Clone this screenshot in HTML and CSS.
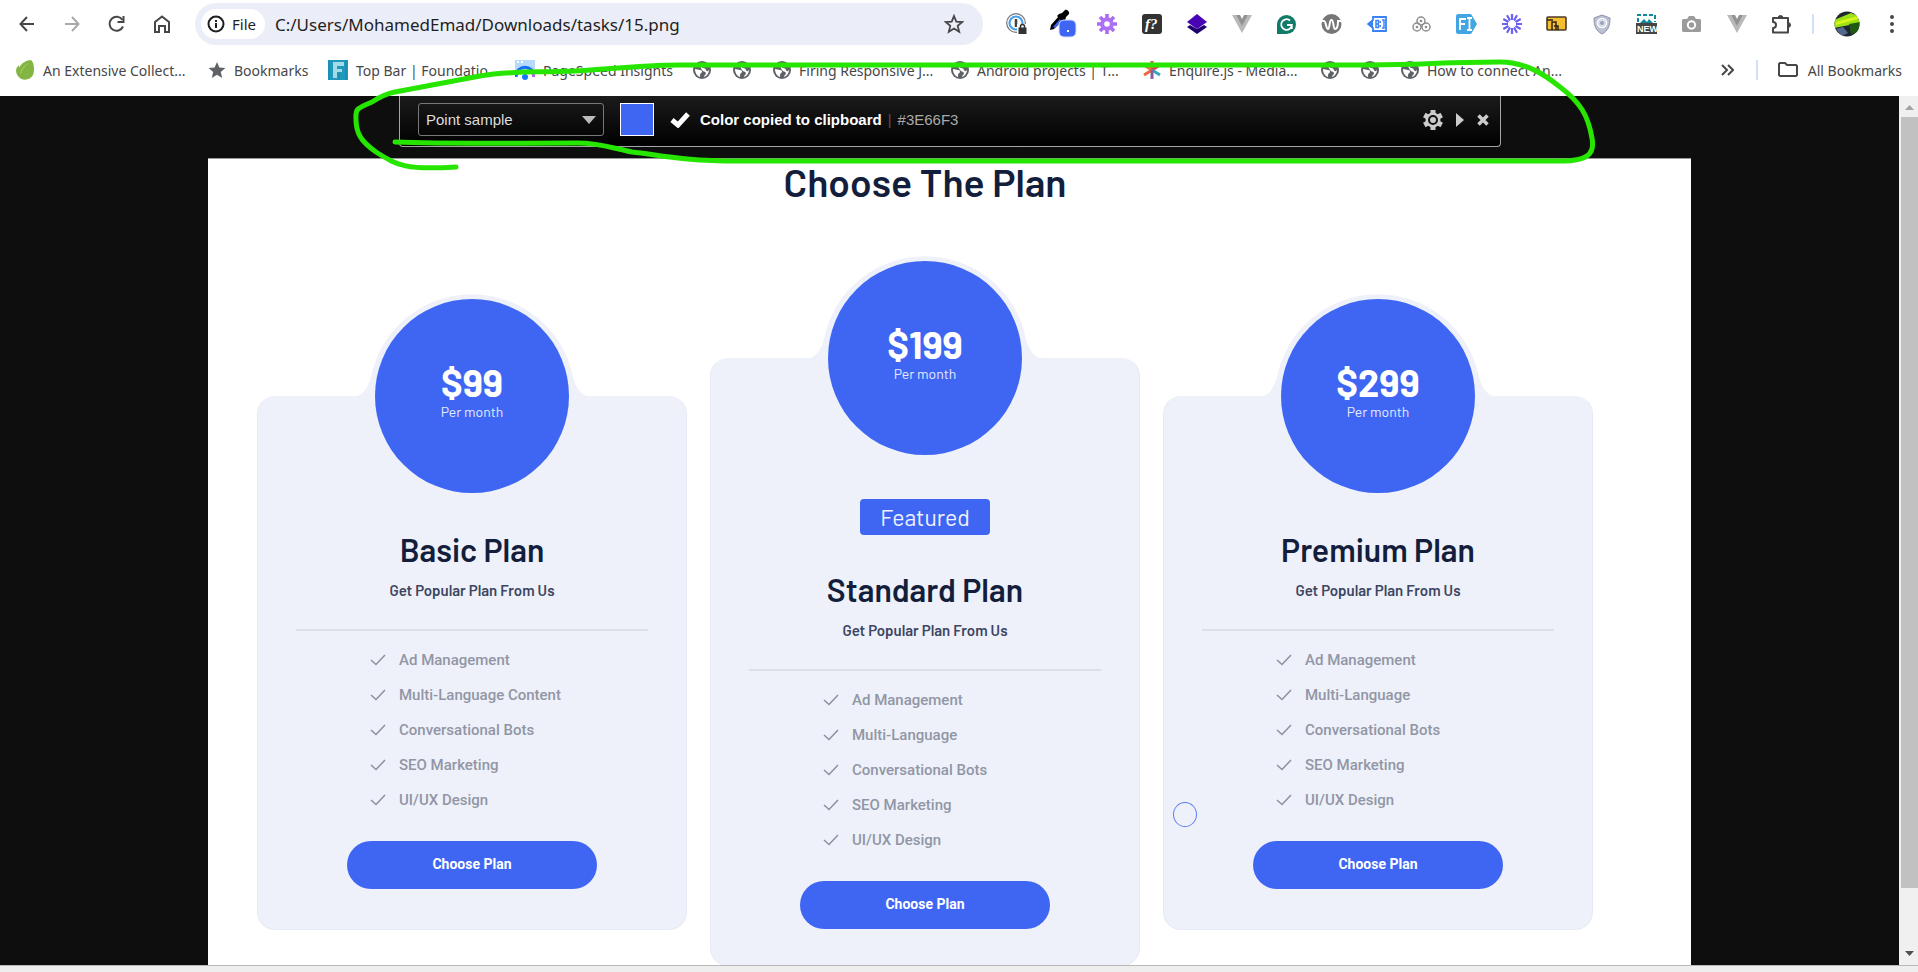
FILE: index.html
```html
<!DOCTYPE html>
<html lang="en">
<head>
<meta charset="utf-8">
<title>15.png</title>
<link rel="stylesheet" href="styles.css">
</head>
<body>
<svg class="defs" aria-hidden="true">
  <symbol id="globe" viewBox="0 0 18 18"><circle cx="9" cy="9" r="9" fill="#5f6368"/><path d="M2 8c2 0 3 1 5 1s2 1 2 2-2 1-2 3v2C4 15 2 12 2 8zM9 2c2 0 3 0 4 1l-1 2h-2L9 7c2 0 3 0 4 2s2 1 3 0c0 3-2 6-5 7 0-2 2-2 2-4-1-2-3-1-4-3S7 6 7 4z" fill="#fff"/></symbol>
  <symbol id="tick" viewBox="0 0 16 12"><path d="M1 6l5 4.500L15 1" fill="none" stroke="#8b90a0" stroke-width="1.500"/></symbol>
  <symbol id="hump" viewBox="0 0 244 104"><path d="M0 104C14 104 18 94 21 84A103 103 0 0 1 223 84C226 94 230 104 244 104Z" fill="#eef1f9"/></symbol>
  <symbol id="vue" viewBox="0 0 20 18"><path d="M0 0h4l6 10L16 0h4L10 18z" fill="#b9b9b9"/><path d="M4 0h4l2 4 2-4h4l-6 11z" fill="#929292"/></symbol>
</svg>

<header class="chrome">
  <div class="toolbar">
    <nav class="nav">
      <button class="tool" aria-label="Back"><svg width="16" height="16" viewBox="0 0 16 16"><path d="M15 8H2M8 1L1.500 8 8 15" fill="none" stroke="#474747" stroke-width="2"/></svg></button>
      <button class="tool" aria-label="Forward"><svg width="16" height="16" viewBox="0 0 16 16"><path d="M1 8h13M8 1l6.500 7L8 15" fill="none" stroke="#a9a9a9" stroke-width="2"/></svg></button>
      <button class="tool" aria-label="Reload"><svg width="18" height="18" viewBox="0 0 18 18"><path d="M15 11.500A7 7 0 1 1 14.500 5" fill="none" stroke="#474747" stroke-width="2"/><path d="M15.500 1v6h-6" fill="none" stroke="#474747" stroke-width="2"/></svg></button>
      <button class="tool" aria-label="Home"><svg width="16" height="18" viewBox="0 0 16 18"><path d="M1 7l7-5.500L15 7v10h-4v-6H5v6H1z" fill="none" stroke="#474747" stroke-width="2"/></svg></button>
    </nav>
    <div class="omnibox">
      <button class="site"><svg width="18" height="18" viewBox="0 0 18 18"><circle cx="9" cy="9" r="7.500" fill="none" stroke="#1f1f1f" stroke-width="2"/><path d="M9 8v5M9 5v2" stroke="#1f1f1f" stroke-width="2"/></svg>File</button>
      <input class="url" aria-label="Address" value="C:/Users/MohamedEmad/Downloads/tasks/15.png">
      <button class="star" aria-label="Bookmark this page"><svg width="20" height="20" viewBox="0 0 20 20"><path d="M10 2l2.300 5.600 6 .4-4.600 3.900 1.500 5.900L10 14.600l-5.200 3.200 1.500-5.900L1.700 8l6-.4z" fill="none" stroke="#474747" stroke-width="1.800"/></svg></button>
    </div>
    <div class="extensions">
      <button class="tool" aria-label="Password manager"><svg width="22" height="22" viewBox="0 0 22 22"><circle cx="10" cy="10" r="9.300" fill="none" stroke="#777" stroke-width="1.200"/><circle cx="10" cy="10" r="6.500" fill="none" stroke="#4a9fe8" stroke-width="2.200"/><path d="M10 6v8" stroke="#444" stroke-width="2.600"/><path d="M11 11h11v11H11z" fill="#fff"/><path d="M12.500 14.500h8V21h-8z" fill="#333"/><path d="M14.500 15v-1.500a2 2 0 0 1 4 0V15" fill="none" stroke="#333" stroke-width="1.500"/></svg></button>
      <button class="tool" aria-label="Color picker"><svg width="30" height="30" viewBox="0 0 30 30"><path d="M3 21l1-5 8-9 4 4-9 9z" fill="#000"/><path d="M6 18l7-8 2 2-7 7z" fill="#3e66f3"/><path d="M12 5l3-1 3-3c2-1 5 2 4 4l-3 3-1 4-2 1-6-6z" fill="#000"/><rect x="12" y="11" width="17" height="17" rx="5" fill="#3e66f3" stroke="#d7e0ff"/><path d="M20 21h2v2h-2z" fill="#fff"/></svg></button>
      <button class="tool" aria-label="Settings extension"><svg width="20" height="20" viewBox="0 0 20 20"><g stroke="#a66cf3" stroke-width="3.500"><path d="M10 0v20M0 10h20M3 3l14 14M17 3L3 17"/></g><circle cx="10" cy="10" r="6.800" fill="#ae70f4"/><circle cx="10" cy="10" r="2.800" fill="#fff"/></svg></button>
      <button class="tool" aria-label="Font finder"><svg width="20" height="20" viewBox="0 0 20 20"><rect width="20" height="20" rx="3" fill="#333"/><text x="3" y="15" class="glyph-f">f?</text></svg></button>
      <button class="tool" aria-label="Layers"><svg width="20" height="20" viewBox="0 0 20 20"><path d="M0 13l3-2 7 4 7-4 3 2-10 7z" fill="#210070"/><path d="M10 0l10 8-10 7L0 8z" fill="#4704b5"/></svg></button>
      <button class="tool" aria-label="Vue devtools"><svg width="20" height="18"><use href="#vue"/></svg></button>
      <button class="tool" aria-label="Grammar"><svg width="19" height="19" viewBox="0 0 19 19"><path d="M0 19V9.500A9.500 9.500 0 1 1 9.500 19z" fill="#117a68"/><path d="M13 5.500A5.300 5.300 0 1 0 14.800 10H10M14.800 9.500V14" fill="none" stroke="#fff" stroke-width="1.800"/></svg></button>
      <button class="tool" aria-label="WhatRuns"><svg width="21" height="20" viewBox="0 0 21 20"><circle cx="10.500" cy="10" r="10" fill="#777"/><path d="M0 7h3c2 0 2 8 4 8s1-9 3.500-9S12 15 14 15s3-4 3-8h4" fill="none" stroke="#fff" stroke-width="2"/></svg></button>
      <button class="tool" aria-label="Tag extension"><svg width="20" height="16" viewBox="0 0 20 16"><path d="M19 1H6v3L1 8l5 4v3h13z" fill="#fff" stroke="#3b82f6" stroke-width="1.800"/><path d="M1 8l5-4v8z" fill="#3b82f6"/><path d="M9 4.500h2.500v7H9zM9 8h2.500M15 4h2v8h-2" fill="none" stroke="#3b82f6" stroke-width="1.500"/><path d="M13.300 5v2M13.300 9v2" stroke="#3b82f6" stroke-width="1.500"/></svg></button>
      <button class="tool" aria-label="Circles extension"><svg width="19" height="16" viewBox="0 0 19 16"><g fill="none" stroke="#8f8f8f" stroke-width="1.500"><circle cx="9" cy="5" r="4"/><circle cx="5" cy="11" r="4"/><circle cx="14" cy="11" r="4"/></g><g fill="#8f8f8f"><circle cx="9" cy="5" r="1.300"/><circle cx="5" cy="11" r="1.300"/><circle cx="14" cy="11" r="1.300"/></g></svg></button>
      <button class="tool" aria-label="Form filler"><svg width="21" height="20" viewBox="0 0 21 20"><path d="M2 0h13l6 10-6 10H2a2 2 0 0 1-2-2V2a2 2 0 0 1 2-2z" fill="#43a5e2"/><path d="M4 16V5h6M4 10h5M11 4h5M11 16h5M13.500 4v12" fill="none" stroke="#fff" stroke-width="1.800"/></svg></button>
      <button class="tool" aria-label="Burst extension"><svg width="20" height="20" viewBox="0 0 20 20"><path d="M10 0v6M10 14v6M0 10h6M14 10h6M5 1.300l3 5.200M12 13.500l3 5.200M15 1.300l-3 5.200M8 13.500l-3 5.200M1.300 5l5.200 3M13.500 12l5.200 3M1.300 15l5.200-3M13.500 8l5.200-3" stroke="#6a62f5" stroke-width="2.200"/></svg></button>
      <button class="tool" aria-label="Folder extension"><svg width="21" height="16" viewBox="0 0 21 16"><rect x="1" y="1" width="19" height="13" rx="1" fill="#f5bd32" stroke="#4b3b28" stroke-width="1.600"/><path d="M1 4h6M6 14V6h4v8M8 10h4v4" fill="none" stroke="#302415" stroke-width="1.500"/></svg></button>
      <button class="tool" aria-label="Shield"><svg width="18" height="21" viewBox="0 0 18 21"><path d="M9 1l8 3c0 8-2 13-8 16C3 17 1 12 1 4z" fill="#b9c1d3" stroke="#8c94aa"/><circle cx="9" cy="9" r="4.700" fill="#d7dce8" stroke="#fff" stroke-width="1.300"/><circle cx="9" cy="9" r="2" fill="#9aa3b8"/></svg></button>
      <button class="tool" aria-label="Image capture"><svg width="21" height="20" viewBox="0 0 21 20"><path d="M2 8V1h17v7" fill="none" stroke="#12899a" stroke-width="2" stroke-dasharray="4 2"/><path d="M4 9l4-4 3 3 2-3 4 4z" fill="#12899a"/><path d="M0 9h21v11H0z" fill="#454545"/><text x="1" y="18" class="glyph-new">NEW</text></svg></button>
      <button class="tool" aria-label="Screenshot"><svg width="19" height="16" viewBox="0 0 19 16"><path d="M1 3h4l2-3h5l2 3h4l1 1v11l-1 1H1l-1-1V4z" fill="#9b9b9b"/><circle cx="9.500" cy="9" r="3.700" fill="none" stroke="#fff" stroke-width="2"/></svg></button>
      <button class="tool" aria-label="Vue devtools legacy"><svg width="20" height="18"><use href="#vue"/></svg></button>
      <button class="tool" aria-label="Extensions"><svg width="22" height="21" viewBox="0 0 22 21"><path d="M2 4h15v14.500H2v-4.500c4 0 4-6 0-6z" fill="none" stroke="#474747" stroke-width="2" stroke-linejoin="round"/><path d="M7 4a2.500 2.500 0 0 1 5 0zM17 8.500a2.500 2.500 0 0 1 0 5z" fill="#474747" stroke="#474747"/></svg></button>
    </div>
    <span class="rule"></span>
    <button class="avatar" aria-label="Profile"><svg width="26" height="26" viewBox="0 0 26 26"><clipPath id="av"><circle cx="13" cy="13" r="12.500"/></clipPath><g clip-path="url(#av)"><path d="M0 0h26v26H0z" fill="#1e2630"/><path d="M0 9L17 2l9 4v6L0 17z" fill="#9ae214"/><path d="M2 11l22-6v3L2 14z" fill="#d7f51c"/><path d="M15 13l11-2v10l-9 2z" fill="#1f5a12"/><path d="M2 18l7-2 5 6-6 3z" fill="#53698c"/></g></svg></button>
    <button class="more" aria-label="Menu"><svg width="4" height="18" viewBox="0 0 4 18"><g fill="#474747"><circle cx="2" cy="2" r="2"/><circle cx="2" cy="9" r="2"/><circle cx="2" cy="16" r="2"/></g></svg></button>
  </div>
  <div class="bookmarks">
    <a class="mark widest" href="#"><svg width="19" height="20" viewBox="0 0 19 20"><path d="M15 0c3 2 4 10 2 15-3 6-12 6-15 1C-1 12 0 8 2 6c1-1 1 0 1 2C5 3 11 0 15 0z" fill="#82b541"/><path d="M4 13C5 8 9 4 13 3 9 6 6 10 5 15z" fill="#98c45e"/></svg>An Extensive Collect...</a>
    <a class="mark short" href="#"><svg width="18" height="18" viewBox="0 0 18 18"><path d="M9 1l2.400 5.600 6 .5-4.600 4 1.400 6L9 13.800 3.800 17l1.400-5.900-4.600-4 6-.5z" fill="#5f6368"/></svg>Bookmarks</a>
    <a class="mark wide" href="#"><svg width="20" height="20" viewBox="0 0 20 20"><path d="M0 0h20v20H0z" fill="#2199bd"/><path d="M5 2v16h4v-6h5V9H9V6h7V2z" fill="#a5dbe9"/><path d="M1 0v20M18 0v20M11 13v7" stroke="#1887aa"/></svg>Top Bar | Foundatio</a>
    <a class="mark mid" href="#"><svg width="20" height="20" viewBox="0 0 20 20"><path d="M0 0h20v14H0z" fill="#b7dafc"/><path d="M2 2h2M6 2h2" stroke="#fff" stroke-width="2"/><path d="M1 17c0-13 18-13 18 0" fill="none" stroke="#1769f5" stroke-width="3"/><path d="M17 12c1 1 2 3 2 5" stroke="#c65bf0" stroke-width="3"/><circle cx="10" cy="17" r="3" fill="#1677ff"/></svg>PageSpeed Insights</a>
    <a class="mark" href="#" aria-label="Bookmark"><svg width="18" height="18"><use href="#globe"/></svg></a>
    <a class="mark" href="#" aria-label="Bookmark"><svg width="18" height="18"><use href="#globe"/></svg></a>
    <a class="mark mid" href="#"><svg width="18" height="18"><use href="#globe"/></svg>Firing Responsive J...</a>
    <a class="mark widest" href="#"><svg width="18" height="18"><use href="#globe"/></svg>Android projects | T...</a>
    <a class="mark mid" href="#"><svg width="18" height="18" viewBox="0 0 18 18"><g stroke-width="3"><path d="M9 9V0" stroke="#e0513c"/><path d="M9 9L1 4M9 9l-8 5" stroke="#f0683c"/><path d="M9 9l8-5" stroke="#e83c55"/><path d="M9 9l8 5" stroke="#38a8b8"/><path d="M9 9v9" stroke="#8b5aa0"/></g></svg>Enquire.js - Media...</a>
    <a class="mark" href="#" aria-label="Bookmark"><svg width="18" height="18"><use href="#globe"/></svg></a>
    <a class="mark" href="#" aria-label="Bookmark"><svg width="18" height="18"><use href="#globe"/></svg></a>
    <a class="mark wide" href="#"><svg width="18" height="18"><use href="#globe"/></svg>How to connect An...</a>
    <button class="overflow" aria-label="More bookmarks"><svg width="13" height="12" viewBox="0 0 13 12"><path d="M1 1l5 5-5 5M7 1l5 5-5 5" fill="none" stroke="#474747" stroke-width="2"/></svg></button>
    <span class="rule"></span>
    <button class="all"><svg width="20" height="16" viewBox="0 0 20 16"><path d="M1 13V2l1-1h5l2 2h9l1 1v9l-1 1H2z" fill="none" stroke="#474747" stroke-width="2"/></svg>All Bookmarks</button>
  </div>
</header>

<div class="viewer">
  <div class="canvas">
    <section class="picker" aria-label="Color picker">
      <select class="sample" aria-label="Sample size"><option>Point sample</option></select>
      <span class="swatch"></span>
      <svg class="copied" width="20" height="17" viewBox="0 0 20 17"><path d="M2 9l6 5L18 3" fill="none" stroke="#fff" stroke-width="5"/></svg>
      <strong class="message">Color copied to clipboard</strong>
      <span class="bar">|</span>
      <span class="hex">#3E66F3</span>
      <div class="actions">
        <button class="action" aria-label="Options"><svg width="20" height="20" viewBox="0 0 20 20"><g stroke="#ccc" stroke-width="5"><path d="M10 0v20M1.300 5l17.400 10M18.700 5L1.300 15"/></g><circle cx="10" cy="10" r="7.500" fill="#ccc"/><circle cx="10" cy="10" r="4" fill="#ccc" stroke="#111" stroke-width="2"/></svg></button>
        <button class="action" aria-label="Move"><svg width="8" height="14" viewBox="0 0 8 14"><path d="M0 0l8 7-8 7z" fill="#ccc"/></svg></button>
        <button class="action" aria-label="Close"><svg width="12" height="12" viewBox="0 0 12 12"><path d="M1.500 1.500l9 9M10.500 1.500l-9 9" stroke="#ccc" stroke-width="3.500"/></svg></button>
      </div>
    </section>

    <main class="sheet">
      <h1 class="title">Choose The Plan</h1>
      <div class="plans">
        <article class="plan">
          <svg class="hump" width="244" height="104"><use href="#hump"/></svg>
          <div class="price"><strong class="amount">$99</strong><span class="per">Per month</span></div>
          <h2 class="name">Basic Plan</h2>
          <p class="tagline">Get Popular Plan From Us</p>
          <hr class="line">
          <ul class="features">
            <li><svg width="16" height="12"><use href="#tick"/></svg>Ad Management</li>
            <li><svg width="16" height="12"><use href="#tick"/></svg>Multi-Language Content</li>
            <li><svg width="16" height="12"><use href="#tick"/></svg>Conversational Bots</li>
            <li><svg width="16" height="12"><use href="#tick"/></svg>SEO Marketing</li>
            <li><svg width="16" height="12"><use href="#tick"/></svg>UI/UX Design</li>
          </ul>
          <button class="choose">Choose Plan</button>
        </article>
        <article class="plan featured">
          <svg class="hump" width="244" height="104"><use href="#hump"/></svg>
          <div class="price"><strong class="amount">$199</strong><span class="per">Per month</span></div>
          <span class="badge">Featured</span>
          <h2 class="name">Standard Plan</h2>
          <p class="tagline">Get Popular Plan From Us</p>
          <hr class="line">
          <ul class="features">
            <li><svg width="16" height="12"><use href="#tick"/></svg>Ad Management</li>
            <li><svg width="16" height="12"><use href="#tick"/></svg>Multi-Language</li>
            <li><svg width="16" height="12"><use href="#tick"/></svg>Conversational Bots</li>
            <li><svg width="16" height="12"><use href="#tick"/></svg>SEO Marketing</li>
            <li><svg width="16" height="12"><use href="#tick"/></svg>UI/UX Design</li>
          </ul>
          <button class="choose">Choose Plan</button>
        </article>
        <article class="plan">
          <svg class="hump" width="244" height="104"><use href="#hump"/></svg>
          <div class="price"><strong class="amount">$299</strong><span class="per">Per month</span></div>
          <h2 class="name">Premium Plan</h2>
          <p class="tagline">Get Popular Plan From Us</p>
          <hr class="line">
          <ul class="features">
            <li><svg width="16" height="12"><use href="#tick"/></svg>Ad Management</li>
            <li><svg width="16" height="12"><use href="#tick"/></svg>Multi-Language</li>
            <li><svg width="16" height="12"><use href="#tick"/></svg>Conversational Bots</li>
            <li><svg width="16" height="12"><use href="#tick"/></svg>SEO Marketing</li>
            <li><svg width="16" height="12"><use href="#tick"/></svg>UI/UX Design</li>
          </ul>
          <button class="choose">Choose Plan</button>
          <span class="pointer"></span>
        </article>
      </div>
    </main>
  </div>
  <div class="scrollbar" aria-hidden="true">
    <svg class="arrow" width="9" height="5" viewBox="0 0 9 5"><path d="M0 5l4.500-5L9 5z" fill="#a3a3a3"/></svg>
    <span class="thumb"></span>
    <svg class="arrow" width="9" height="5" viewBox="0 0 9 5"><path d="M0 0l4.500 5L9 0z" fill="#505050"/></svg>
  </div>
</div>
<footer class="shelf"></footer>

<svg class="ink" viewBox="0 0 1918 972" preserveAspectRatio="none" aria-hidden="true"><path d="M395 142C450 144 500 143 578 143C600 143 612 148 632 152C660 155 680 161 740 161H1560C1588 161 1595 154 1592 138C1588 115 1580 102 1560 87C1544 74 1525 62 1500 62C1440 62 1425 65 1370 65H680C640 65 600 70 575 71C540 73 515 70 480 76L395 92C384 94 378 98 372 102C358 108 356 109 356 115C355 134 362 142 376 152C398 166 406 170 456 167"/></svg>
</body>
</html>
```

FILE: styles.css
```css
* { box-sizing: border-box; }
body {
  margin: 0;
  height: 100vh;
  display: flex;
  flex-direction: column;
  overflow: hidden;
  position: relative;
  background: #fff;
  font-family: "Noto Sans", sans-serif;
  color: #1f1f1f;
}
button { border: 0; padding: 0; background: none; font: inherit; color: inherit; }
svg { flex: none; display: block; }
.defs { position: absolute; width: 0; height: 0; }

/* Browser toolbar */
.chrome { flex: none; background: #fff; }
.toolbar { display: flex; align-items: center; height: 48px; padding-left: 4px; }
.nav { display: flex; margin-right: 11px; }
.tool { width: 45px; height: 40px; flex: none; display: flex; align-items: center; justify-content: center; }
.omnibox {
  flex: 1;
  min-width: 0;
  display: flex;
  align-items: center;
  height: 42px;
  padding: 0 19px 0 6px;
  border-radius: 21px;
  background: #ebeef8;
}
.site { display: flex; align-items: center; gap: 7px; width: 64px; height: 30px; padding-left: 6px; border-radius: 15px; background: #fff; font-size: 15px; }
.url { flex: 1; min-width: 0; border: 0; padding: 0 0 0 10px; background: none; font: 17px "Noto Sans", sans-serif; color: #1f1f1f; }
.extensions { display: flex; margin: 0 8px 0 11px; }
.glyph-f { font: italic bold 15px "Liberation Serif", serif; fill: #fff; }
.glyph-new { font: bold 9px "Liberation Sans", sans-serif; fill: #fff; }
.rule { width: 2px; height: 20px; background: #d3e0fb; }
.avatar { margin: 0 30px 0 20px; }
.more { margin-right: 24px; }

.bookmarks { display: flex; align-items: center; height: 48px; padding: 0 16px 4px; font-size: 14px; color: #474747; white-space: nowrap; }
.mark { display: flex; align-items: center; gap: 8px; margin-right: 22px; color: inherit; text-decoration: none; }
.widest { width: 170px; }
.wide { width: 165px; }
.mid { width: 156px; }
.short { width: 98px; }
.overflow { margin: 0 22px 0 auto; }
.all { display: flex; align-items: center; gap: 10px; margin-left: 20px; }

/* Image viewer */
.viewer { flex: 1; min-height: 0; display: flex; background: #0e0e0e; }
.canvas { flex: 1; min-width: 0; padding: 0 208px; overflow: hidden; }
.picker {
  display: flex;
  align-items: center;
  height: 51px;
  margin: 0 190px 11px 191px;
  padding: 0 11px 3px 18px;
  border: 1px solid #a5a5a5;
  border-top: 0;
  border-radius: 0 0 4px 4px;
  background: linear-gradient(#1b1b1b, #000);
  font: 15px "Liberation Sans", Arial, sans-serif;
  color: #ccc;
}
.sample {
  appearance: none;
  width: 186px;
  height: 33px;
  margin-right: 16px;
  padding: 0 7px;
  border: 1px solid #777;
  border-radius: 3px;
  background: url("data:image/svg+xml,%3Csvg xmlns='http://www.w3.org/2000/svg' width='14' height='8'%3E%3Cpath d='M0 0h14L7 8z' fill='%23bbb'/%3E%3C/svg%3E") no-repeat right 7px center;
  font: inherit;
  color: #ddd;
}
.swatch { width: 34px; height: 33px; border: 1px solid #fff; background: #3e66f3; }
.copied { margin: 0 10px 0 16px; }
.message { color: #fff; }
.bar { margin: 0 6px; color: #555; }
.hex { color: #aaa; }
.actions { display: flex; align-items: center; gap: 13px; margin-left: auto; }

.sheet {
  padding: 0 98px 0 49px;
  border-top: 1px solid #999;
  background: #fff;
  color: #131e3d;
  font-family: Barlow, Roboto, sans-serif;
  min-height: 100%;
}
.title { margin: 0; font-size: 39px; line-height: 46px; font-weight: 600; text-align: center; }
.plans { display: grid; grid-template-columns: repeat(3, 1fr); align-items: start; gap: 23px; padding-top: 191px; }
.plan {
  position: relative;
  display: flex;
  flex-direction: column;
  align-items: center;
  padding: 130px 38px 40px;
  border: 1px solid #e6eaf4;
  border-top-color: #eef1f9;
  border-radius: 18px;
  background: #eef1f9;
}
.featured { margin-top: -38px; padding-bottom: 36px; }
.hump { position: absolute; top: -104px; left: 50%; margin-left: -122px; }
.price {
  position: absolute;
  top: -98px;
  left: 50%;
  width: 194px;
  height: 194px;
  margin-left: -97px;
  padding-bottom: 9px;
  border-radius: 50%;
  display: flex;
  flex-direction: column;
  align-items: center;
  justify-content: center;
  background: #3e66f3;
  color: #fff;
}
.amount { font-size: 38px; line-height: 40px; font-weight: 700; }
.per { font-size: 14px; line-height: 20px; color: #e6ebff; }
.badge { height: 36px; margin: 10px 0 32px; padding: 0 20px; border-radius: 4px; background: #3e66f3; color: #eef1ff; font-size: 23px; line-height: 37px; }
.name { margin: 0; font-size: 32px; line-height: 44px; font-weight: 600; }
.tagline { margin: 9px 0 29px; font-size: 15px; line-height: 20px; font-weight: 600; color: #3c4562; }
.line { align-self: stretch; height: 2px; margin: 0; border: 0; background: #dcdfe4; }
.features { align-self: stretch; margin: 11px 0 24px; padding: 0 0 0 74px; list-style: none; font: 500 15px Roboto, sans-serif; color: #9196a6; }
.features li { display: flex; align-items: center; gap: 13px; height: 35px; }
.choose { width: 250px; height: 48px; padding-bottom: 2px; border-radius: 24px; background: #3e66f3; color: #fff; font: bold 14px Roboto, sans-serif; }
.pointer { position: absolute; left: 9px; bottom: 102px; width: 24px; height: 25px; border: 1px solid #5c7df5; border-radius: 50%; }

.scrollbar { width: 19px; display: flex; flex-direction: column; align-items: center; padding: 9px 0 9px 2px; background: #f0f0f0; }
.thumb { flex: 1; align-self: stretch; margin: 7px 0 63px; background: #c1c1c1; }
.shelf { flex: none; height: 7px; border-top: 1px solid #b9b9b9; background: #eee; }

/* Hand-drawn marker over the page */
.ink { position: absolute; inset: 0; width: 100%; height: 100%; pointer-events: none; }
.ink path { fill: none; stroke: #26e600; stroke-width: 5; stroke-linecap: round; stroke-linejoin: round; }
```
